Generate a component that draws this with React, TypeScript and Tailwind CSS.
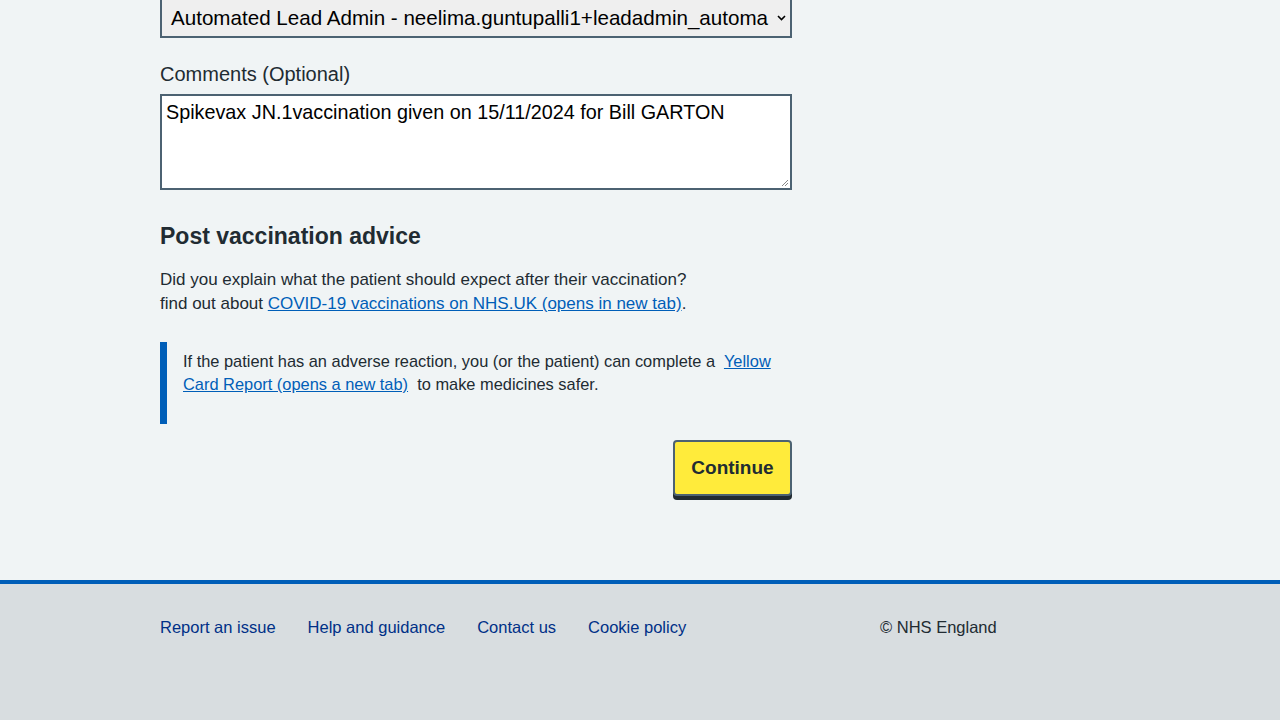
import React from 'react';

const footerLinks = ['Report an issue', 'Help and guidance', 'Contact us', 'Cookie policy'];

const App: React.FC = () => {
  return (
    <div className="min-h-[720px] flex flex-col bg-[#f0f4f5] text-[#212b32] font-['Liberation_Sans',Arial,sans-serif]">
      <main className="flex-1 pl-[160px]">
        <div className="w-[632px] pb-[80px]">
          {/* Select (scrolled partly out of view) */}
          <div className="relative mt-[-2px]">
            <div className="h-[40px] flex items-center border-2 border-[#4c6272] bg-[#efefef] pl-[9px] pr-[24px] text-[20.6px] text-black whitespace-nowrap overflow-hidden">
              Automated Lead Admin - neelima.guntupalli1+leadadmin_automa
            </div>
            <svg className="absolute right-[6px] top-[17px]" width="9" height="6" viewBox="0 0 9 6">
              <path d="M1 1l3.5 3.5L8 1" fill="none" stroke="#000" strokeWidth="1.6" />
            </svg>
          </div>

          {/* Comments */}
          <label className="block mt-[22px] mb-[6px] text-[20px] leading-[28px]">Comments (Optional)</label>
          <div className="relative h-[96px] border-2 border-[#4c6272] bg-white px-[4px] pt-[3px] text-[19.8px] leading-[26px] text-black">
            Spikevax JN.1vaccination given on 15/11/2024 for Bill GARTON
            <svg className="absolute right-[1px] bottom-[1px]" width="8" height="8" viewBox="0 0 8 8">
              <path d="M7 1L1 7M7 4L4 7" stroke="#888" strokeWidth="1" />
            </svg>
          </div>

          {/* Post vaccination advice */}
          <h2 className="mt-[30px] text-[23px] leading-[32px] font-bold">Post vaccination advice</h2>
          <p className="mt-[16px] text-[17px] leading-[24px]">
            Did you explain what the patient should expect after their vaccination?
            <br />
            find out about{' '}
            <a href="#" className="text-[#005eb8] underline">COVID-19 vaccinations on NHS.UK (opens in new tab)</a>.
          </p>

          <div className="mt-[26px] h-[82px] border-l-[7px] border-[#005eb8] pl-[16px] pt-[8px] text-[16.4px] leading-[23px]">
            If the patient has an adverse reaction, you (or the patient) can complete a&nbsp;{' '}
            <a href="#" className="text-[#005eb8] underline">Yellow</a>
            <br />
            <a href="#" className="text-[#005eb8] underline">Card Report (opens a new tab)</a>
            &nbsp; to make medicines safer.
          </div>

          <div className="mt-[16px] flex justify-end">
            <button className="h-[56px] w-[119px] rounded-[4px] border-2 border-[#4c6272] bg-[#ffeb3b] text-[19px] font-bold text-[#212b32] shadow-[0_4px_0_#212b32]">
              Continue
            </button>
          </div>
        </div>
      </main>

      <footer className="h-[140px] border-t-4 border-[#005eb8] bg-[#d8dde0]">
        <div className="flex pl-[160px] pt-[31px] text-[16.5px] leading-[24px]">
          <ul className="flex w-[720px] gap-[32px]">
            {footerLinks.map((l) => (
              <li key={l}>
                <a href="#" className="text-[#003087]">{l}</a>
              </li>
            ))}
          </ul>
          <p>© NHS England</p>
        </div>
      </footer>
    </div>
  );
};

export default App;
